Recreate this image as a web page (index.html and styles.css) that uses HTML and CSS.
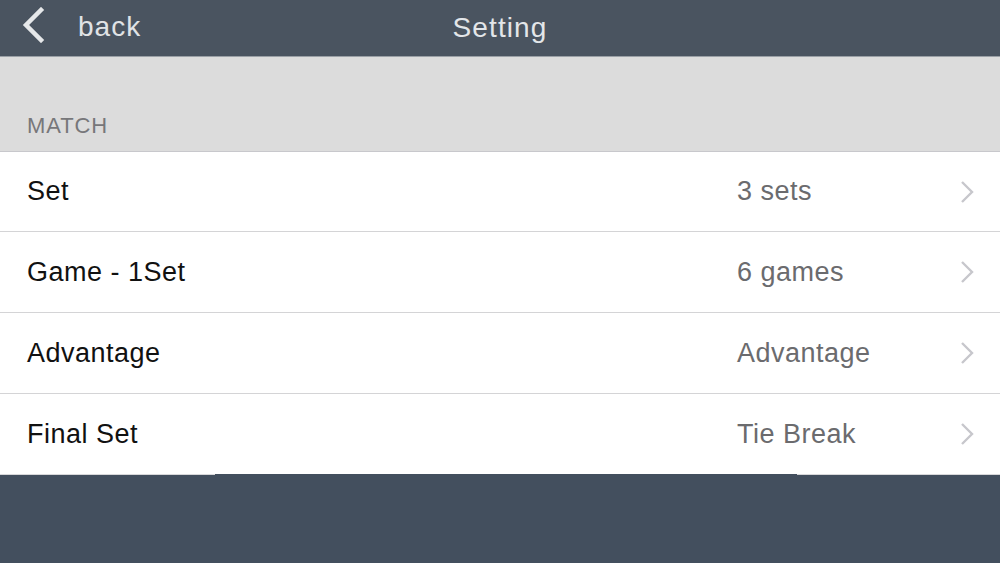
FILE: index.html
```html
<!DOCTYPE html>
<html>
<head>
<meta charset="utf-8">
<link rel="stylesheet" href="styles.css">
</head>
<body>
<div class="app">
  <header class="nav">
    <div class="nav-back">
      <svg class="back-icon" width="26" height="36" viewBox="0 0 26 36"><path d="M21 3 L6 18 L21 33" fill="none" stroke="#e6e8ea" stroke-width="4.5" stroke-linecap="square"/></svg>
      <span class="back-text">back</span>
    </div>
    <div class="nav-title">Setting</div>
  </header>
  <div class="section-head"><span>MATCH</span></div>
  <ul class="list">
    <li class="row"><span class="label">Set</span><span class="value">3 sets</span><svg class="chev" width="14" height="24" viewBox="0 0 14 24"><path d="M2 2 L12 12 L2 22" fill="none" stroke="#c7c7cc" stroke-width="2.4"/></svg></li>
    <li class="row"><span class="label">Game - 1Set</span><span class="value">6 games</span><svg class="chev" width="14" height="24" viewBox="0 0 14 24"><path d="M2 2 L12 12 L2 22" fill="none" stroke="#c7c7cc" stroke-width="2.4"/></svg></li>
    <li class="row"><span class="label">Advantage</span><span class="value">Advantage</span><svg class="chev" width="14" height="24" viewBox="0 0 14 24"><path d="M2 2 L12 12 L2 22" fill="none" stroke="#c7c7cc" stroke-width="2.4"/></svg></li>
    <li class="row last"><span class="label">Final Set</span><span class="value">Tie Break</span><svg class="chev" width="14" height="24" viewBox="0 0 14 24"><path d="M2 2 L12 12 L2 22" fill="none" stroke="#c7c7cc" stroke-width="2.4"/></svg></li>
  </ul>
  <footer class="footer"><div class="edge-l"></div><div class="edge-r"></div></footer>
</div>
</body>
</html>
```
FILE: styles.css
```css
* { box-sizing: border-box; }
html, body { margin: 0; padding: 0; }
body { width: 1000px; height: 563px; overflow: hidden; font-family: "Liberation Sans", Arial, sans-serif; background: #434f5e; }
.app { display: flex; flex-direction: column; height: 563px; }
.nav { height: 57px; background: #4a5460; border-bottom: 1px solid #9aa0a6; position: relative; display: flex; align-items: center; }
.nav-back { display: flex; align-items: center; padding-left: 20px; height: 100%; }
.back-icon { display: block; margin-top: -6px; }
.back-text { color: #e0e3e6; font-size: 28px; letter-spacing: 1px; margin-left: 32px; margin-top: -2px; }
.nav-title { position: absolute; left: 0; right: 0; top: 12px; text-align: center; color: #e3e6e9; font-size: 28px; letter-spacing: 1.1px; pointer-events: none; }
.section-head { height: 95px; background: #dcdcdc; border-bottom: 1px solid #c8c8cc; display: flex; align-items: flex-end; padding: 0 0 12px 27px; }
.section-head span { color: #77777a; font-size: 22px; letter-spacing: 0.9px; }
.list { list-style: none; margin: 0; padding: 0; background: #fff; }
.row { height: 81px; display: flex; align-items: center; border-bottom: 1px solid #d4d4d6; padding: 0 26px 0 27px; }
.row:first-child { height: 80px; }
.row.last { height: 80px; border-bottom: none; }
.label { color: #111; font-size: 27px; letter-spacing: 0.5px; flex: 1; }
.value { color: #6b6b6e; font-size: 27px; letter-spacing: 0.5px; width: 223px; }
.chev { display: block; }
.footer { flex: 1; background: #434f5e; position: relative; }
.edge-l { position: absolute; left: 0; top: 0; width: 215px; height: 1px; background: #d8d8da; }
.edge-r { position: absolute; right: 0; top: 0; width: 203px; height: 1px; background: #d8d8da; }
```
